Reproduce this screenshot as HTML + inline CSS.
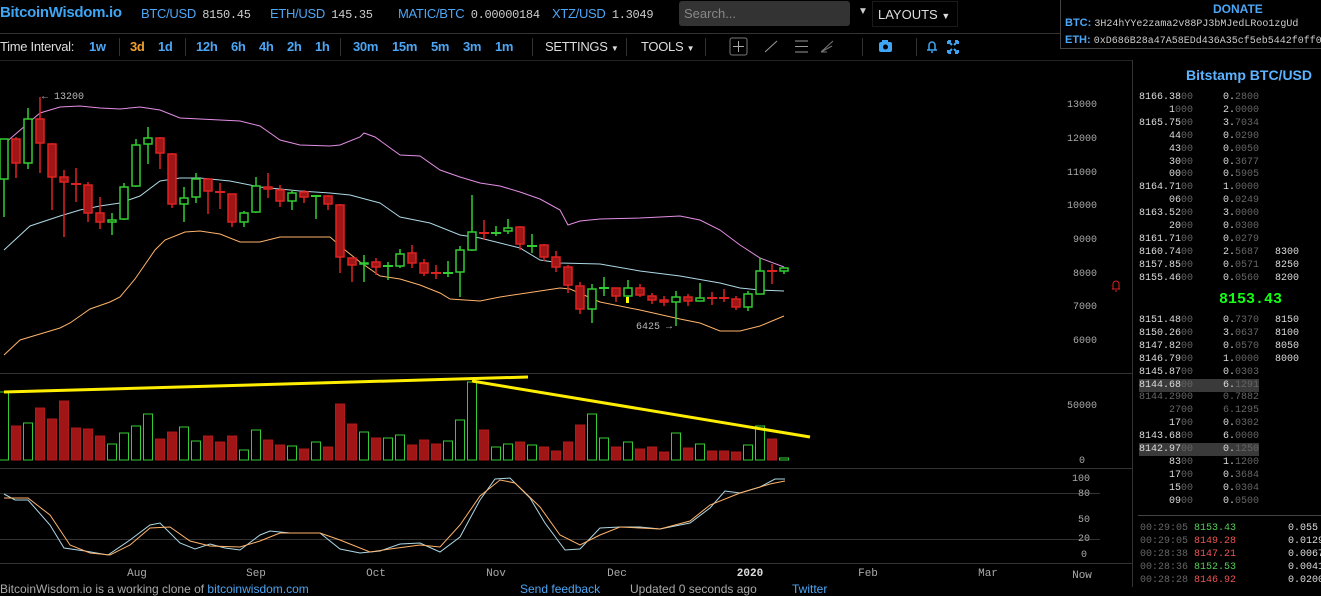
<!DOCTYPE html>
<html><head><meta charset="utf-8"><style>
*{margin:0;padding:0;box-sizing:border-box}
body{width:1321px;height:587px;background:#000;overflow:hidden;position:relative;font-family:"Liberation Sans Narrow","Liberation Sans",sans-serif;color:#ccc}
.a{position:absolute;white-space:nowrap}
.b{color:#4da6f5}
.m{font-family:"Liberation Mono",monospace}
.tb span{position:absolute;top:39px;font-size:13px;color:#4da6f5;font-weight:bold;letter-spacing:-0.3px}
.ob{position:absolute;left:1140px;width:170px;font-family:"Liberation Mono",monospace;font-size:10px;color:#ddd;height:13px;line-height:13px}
.ob i{font-style:normal;color:#666}
.ob .p{position:absolute;right:117px}
.ob .q{position:absolute;left:83px}
.ob .s{position:absolute;left:135px}
.dim{color:#666!important}
</style></head><body>
<div class="a b" style="left:0;top:4px;font-size:15px;font-weight:bold;font-family:'Liberation Sans',sans-serif;color:#3ea6f5;letter-spacing:-0.3px">BitcoinWisdom.io</div>
<div class="a" style="left:141px;top:6px;font-size:13px;letter-spacing:-0.3px"><span class="b">BTC/USD</span> <span class="m" style="font-size:12px;margin-left:3px">8150.45</span></div>
<div class="a" style="left:270px;top:6px;font-size:13px;letter-spacing:-0.3px"><span class="b">ETH/USD</span> <span class="m" style="font-size:12px;margin-left:3px">145.35</span></div>
<div class="a" style="left:398px;top:6px;font-size:13px;letter-spacing:-0.3px"><span class="b">MATIC/BTC</span> <span class="m" style="font-size:12px;margin-left:3px">0.00000184</span></div>
<div class="a" style="left:552px;top:6px;font-size:13px;letter-spacing:-0.3px"><span class="b">XTZ/USD</span> <span class="m" style="font-size:12px;margin-left:3px">1.3049</span></div>
<div class="a" style="left:679px;top:1px;width:171px;height:25px;background:#333;border-radius:3px;color:#888;font-size:13px;padding:5px 5px">Search...</div>
<div class="a" style="left:858px;top:6px;font-size:10px;color:#ccc">▼</div>
<div class="a" style="left:872px;top:1px;width:86px;height:26px;border:1px solid #1a1a1a;font-size:13px;padding:5px 5px;color:#ddd">LAYOUTS <span style="font-size:9px">▼</span></div>
<div class="a" style="left:1060px;top:-1px;width:270px;height:50px;border:1px solid #444;background:#000"></div>
<div class="a b" style="left:1213px;top:2px;font-size:12px;font-weight:bold">DONATE</div>
<div class="a" style="left:1065px;top:17px;font-size:11px"><b class="b">BTC:</b> <span class="m" style="font-size:10px">3H24hYYe2zama2v88PJ3bMJedLRoo1zgUd</span></div>
<div class="a" style="left:1065px;top:34px;font-size:11px"><b class="b">ETH:</b> <span class="m" style="font-size:10px">0xD686B28a47A58EDd436A35cf5eb5442f0ff0</span></div>
<div class="a" style="left:0;top:33px;width:1060px;height:1px;background:#333"></div>
<div class="tb">
<span style="left:0;color:#ddd;font-weight:normal">Time Interval:</span>
<span style="left:89px">1w</span><span style="left:130px;color:#f0a030">3d</span><span style="left:158px">1d</span>
<span style="left:196px">12h</span><span style="left:231px">6h</span><span style="left:259px">4h</span><span style="left:287px">2h</span><span style="left:315px">1h</span>
<span style="left:353px">30m</span><span style="left:392px">15m</span><span style="left:431px">5m</span><span style="left:463px">3m</span><span style="left:495px">1m</span>
<span style="left:545px;color:#ddd;font-weight:normal">SETTINGS <small style="font-size:8px">▼</small></span>
<span style="left:641px;color:#ddd;font-weight:normal">TOOLS <small style="font-size:8px">▼</small></span>
</div>
<div class="a" style="left:119px;top:38px;width:1px;height:18px;background:#333"></div>
<div class="a" style="left:185px;top:38px;width:1px;height:18px;background:#333"></div>
<div class="a" style="left:340px;top:38px;width:1px;height:18px;background:#333"></div>
<div class="a" style="left:532px;top:38px;width:1px;height:18px;background:#333"></div>
<div class="a" style="left:626px;top:38px;width:1px;height:18px;background:#333"></div>
<div class="a" style="left:705px;top:38px;width:1px;height:18px;background:#333"></div>
<div class="a" style="left:862px;top:38px;width:1px;height:18px;background:#333"></div>
<div class="a" style="left:916px;top:38px;width:1px;height:18px;background:#333"></div>
<svg class="a" style="left:720px;top:36px" width="250" height="22">
<rect x="10" y="2" width="17" height="17" fill="none" stroke="#777" rx="2"/><path d="M18.5 5v11M13 10.5h11" stroke="#aaa"/>
<path d="M45 16l12-11" stroke="#999"/>
<path d="M75 5h13M75 10.5h13M75 16h13" stroke="#999"/>
<path d="M101 16l12-11M101 16l11-6M101 16l6 0" stroke="#777"/>
<rect x="159" y="6" width="13" height="10" rx="2" fill="#3ea6f5"/><rect x="162" y="4" width="6" height="3" fill="#3ea6f5"/><circle cx="165.5" cy="11" r="2.5" fill="#000"/>
<path d="M207 14h10M209 14v-5a3 3 0 0 1 6 0v5M211 16h2" stroke="#3ea6f5" fill="none" stroke-width="1.5"/>
<path d="M228 5l4 4M238 5l-4 4M228 17l4-4M238 17l-4-4M228 5h3M228 5v3M238 5h-3M238 5v3M228 17h3M228 17v-3M238 17h-3M238 17v-3" stroke="#3ea6f5" stroke-width="2"/>
</svg>
<div class="a" style="left:0;top:60px;width:1132px;height:1px;background:#222"></div>
<svg class="a" style="left:0;top:0" width="1132" height="587">
<g stroke="#333" stroke-width="1"><line x1="0" y1="373.5" x2="1132" y2="373.5"/><line x1="0" y1="468.5" x2="1132" y2="468.5"/><line x1="0" y1="563.5" x2="1132" y2="563.5"/>
<line x1="0" y1="493.5" x2="1100" y2="493.5"/><line x1="0" y1="539.5" x2="1100" y2="539.5"/></g>
<polyline fill="none" stroke="#e58ee5" points="4,144 40,113 60,107 80,106 100,108 120,109 140,107 160,110 180,118 200,119 240,121 260,126 270,133 280,140 300,145 330,146 340,145 360,137 364,133 375,137 400,155 420,156 440,170 460,177 480,183 500,186 520,192 540,199 560,210 568,225 580,221 600,219 640,218 660,217 680,216 700,220 720,230 740,245 760,258 784,267"/>
<polyline fill="none" stroke="#add8e6" points="4,250 30,226 60,216 80,210 100,206 120,203 140,196 160,181 180,178 200,178 230,181 260,187 280,189 300,191 330,193 350,195 380,203 400,217 430,223 460,235 480,238 500,243 520,248 540,260 560,263 600,264 640,271 680,276 720,283 740,288 760,290 784,291"/>
<polyline fill="none" stroke="#ffb36b" points="4,355 20,340 40,334 60,328 70,323 80,316 90,309 110,302 120,297 135,279 155,250 165,240 185,232 200,231 220,234 240,242 260,242 280,237 320,237 330,237 345,250 360,262 380,276 400,279 420,285 440,293 450,299 480,301 500,297 520,294 540,291 560,288 570,289 600,302 640,310 680,319 700,323 720,331 740,331 760,326 784,316"/>
<g id="c" stroke-width="1.5"></g>
<g fill="#b8b8b8" font-family="Liberation Mono,monospace" font-size="10"><text x="42" y="99">← 13200</text><text x="636" y="329">6425 →</text></g>
<line x1="4" y1="392" x2="528" y2="377" stroke="#ffee00" stroke-width="3"/>
<line x1="472" y1="381" x2="810" y2="437" stroke="#ffee00" stroke-width="3"/>
<polyline fill="none" stroke="#add8e6" points="4,494 15,500 28,500 50,525 64,548 85,551 108,555 130,540 150,525 160,523 180,543 195,549 210,544 225,548 240,550 260,535 270,531 290,533 320,533 340,549 360,553 380,551 400,544 420,543 440,552 460,537 480,500 495,479 510,478 530,498 545,523 565,550 580,549 600,528 620,527 640,527 660,529 690,523 710,508 725,491 740,493 760,487 775,479 785,479"/>
<polyline fill="none" stroke="#ffb36b" points="4,498 28,498 50,515 70,545 90,553 110,555 130,545 150,528 170,527 190,541 210,546 240,547 260,541 280,533 320,533 340,540 370,552 390,549 420,545 440,547 460,525 480,496 500,480 515,483 540,507 560,535 580,545 600,535 620,527 660,529 690,521 710,505 740,493 770,484 785,481"/>
<g fill="#aaa" font-family="Liberation Mono,monospace" font-size="10" text-anchor="end">
<text x="1097" y="107">13000</text><text x="1097" y="141">12000</text><text x="1097" y="175">11000</text><text x="1097" y="208">10000</text><text x="1097" y="242">9000</text><text x="1097" y="276">8000</text><text x="1097" y="309">7000</text><text x="1097" y="343">6000</text>
<text x="1097" y="408">50000</text><text x="1085" y="463">0</text>
<text x="1090" y="481">100</text><text x="1090" y="496">80</text><text x="1090" y="522">50</text><text x="1090" y="541">20</text><text x="1087" y="557">0</text></g>
<g fill="#aaa" font-family="Liberation Mono,monospace" font-size="11" text-anchor="middle">
<text x="137" y="576">Aug</text><text x="256" y="576">Sep</text><text x="376" y="576">Oct</text><text x="496" y="576">Nov</text><text x="617" y="576">Dec</text><text x="750" y="576" fill="#ddd" font-weight="bold">2020</text><text x="868" y="576">Feb</text><text x="988" y="576">Mar</text><text x="1082" y="578">Now</text></g>
<path d="M1112 289h8M1113 289v-5a3 3 0 0 1 6 0v5M1115 291h2" stroke="#d22" fill="none"/>
</svg>
<div class="a" style="left:0;top:582px;font-size:12px;color:#aaa">BitcoinWisdom.io is a working clone of <span class="b">bitcoinwisdom.com</span></div>
<div class="a b" style="left:520px;top:582px;font-size:12px">Send feedback</div>
<div class="a" style="left:630px;top:582px;font-size:12px;color:#aaa">Updated 0 seconds ago</div>
<div class="a b" style="left:792px;top:582px;font-size:12px">Twitter</div>
<div class="a" style="left:1132px;top:60px;width:1px;height:527px;background:#333"></div>
<div class="a b" style="left:1186px;top:67px;font-size:14px;font-weight:bold;font-family:'Liberation Sans',sans-serif;color:#5cb3ff">Bitstamp BTC/USD</div>
<div id="ob"></div>
<div class="a" style="left:1219px;top:291px;font-family:'Liberation Mono',monospace;font-size:15px;font-weight:bold;color:#1f1">8153.43</div>
<div class="a" style="left:1138px;top:515px;width:183px;height:1px;background:#444"></div>
<script>
var C=[[4,139,179,139,217,1],[16,139,163,137,178,0],[28,119,163,108,169,1],[40,119,143,97,173,0],[52,144,177,143,210,0],[64,177,182,170,237,0],[76,184,184,168,202,0],[88,185,213,182,222,0],[100,213,222,197,229,0],[112,220,222,213,235,1],[124,187,219,183,220,1],[136,145,186,139,187,1],[148,138,144,127,164,1],[160,138,153,137,169,0],[172,154,204,153,208,0],[184,198,204,187,222,1],[196,179,197,173,203,1],[208,179,191,178,214,0],[220,192,192,183,209,0],[232,194,222,194,227,0],[244,213,222,211,227,1],[256,186,212,177,213,1],[268,187,189,173,198,0],[280,190,201,185,207,0],[292,193,201,190,210,1],[304,192,197,190,203,0],[316,196,196,196,219,1],[328,196,204,195,210,0],[340,205,257,204,273,0],[352,258,265,258,282,0],[364,263,264,255,282,1],[376,262,267,258,275,0],[388,266,266,262,280,1],[400,254,266,249,268,1],[412,253,263,245,268,0],[424,263,273,259,276,0],[436,273,273,265,279,0],[448,273,273,261,277,1],[460,250,272,246,297,1],[472,232,250,195,251,1],[484,233,233,220,240,0],[496,233,233,226,236,1],[508,228,231,219,234,1],[520,227,244,226,250,0],[532,246,246,234,253,1],[544,245,257,244,261,0],[556,257,267,251,272,0],[568,267,285,265,293,0],[580,286,309,282,314,0],[592,289,309,284,323,1],[604,288,288,277,296,1],[616,288,296,288,302,0],[628,288,296,280,302,1],[640,288,295,284,297,0],[652,296,300,293,304,0],[664,300,302,296,306,0],[676,297,302,291,326,1],[688,297,301,294,306,0],[700,298,301,283,301,1],[712,298,298,292,305,0],[724,298,298,289,302,0],[736,299,307,296,310,0],[748,294,307,291,311,1],[760,271,294,258,294,1],[772,271,271,264,284,0],[784,268,271,267,274,1]];
var V=[[392,1],[426,0],[423,1],[408,0],[419,0],[401,0],[428,0],[429,0],[436,0],[444,1],[433,1],[426,1],[414,1],[439,0],[432,0],[427,1],[441,1],[436,0],[442,0],[436,0],[450,1],[430,1],[440,0],[445,0],[446,1],[449,0],[442,1],[447,0],[404,0],[424,0],[432,1],[438,0],[438,1],[435,1],[445,0],[440,0],[444,0],[441,1],[420,1],[382,1],[430,0],[447,1],[444,1],[442,0],[445,1],[447,0],[451,0],[442,0],[425,0],[414,1],[438,1],[447,0],[442,1],[449,0],[447,0],[452,0],[433,1],[448,0],[444,1],[451,0],[451,0],[452,0],[445,1],[426,1],[439,0],[458,1]];
var s='';
C.forEach(function(c){var col=c[5]?'#3c3':'#d22';
s+='<line x1="'+c[0]+'" y1="'+c[3]+'" x2="'+c[0]+'" y2="'+c[4]+'" stroke="'+col+'"/>';
if(c[2]-c[1]<1)s+='<line x1="'+(c[0]-5)+'" y1="'+c[1]+'" x2="'+(c[0]+5)+'" y2="'+c[1]+'" stroke="'+col+'" stroke-width="2"/>';
else s+='<rect x="'+(c[0]-4)+'" y="'+c[1]+'" width="8" height="'+(c[2]-c[1])+'" fill="'+(c[5]?'#000':'#a01515')+'" stroke="'+col+'"/>';});
s+='<rect x="626" y="297" width="3" height="6" fill="#ff0"/>';
V.forEach(function(v,i){var x=4+i*12;s+='<rect x="'+(x-4.5)+'" y="'+v[0]+'" width="9" height="'+(460-v[0])+'" fill="'+(v[1]?'#000':'#a01515')+'" stroke="'+(v[1]?'#3c3':'#b01a1a')+'" stroke-width="1"/>';});
document.getElementById('c').innerHTML=s;
var R=[['8166.38','00','0.','2800',''],['1','000','2.','0000',''],['8165.75','00','3.','7034',''],['44','00','0.','0290',''],['43','00','0.','0050',''],['30','00','0.','3677',''],['00','00','0.','5905',''],['8164.71','00','1.','0000',''],['06','00','0.','0249',''],['8163.52','00','3.','0000',''],['20','00','0.','0300',''],['8161.71','00','0.','0279',''],['8160.74','00','2.','5687','8300'],['8157.85','00','0.','0571','8250'],['8155.46','00','0.','0560','8200']];
var R2=[['8151.48','00','0.','7370','8150'],['8150.26','00','3.','0637','8100'],['8147.82','00','0.','0570','8050'],['8146.79','00','1.','0000','8000'],['8145.87','00','0.','0303',''],['8144.68','00','6.','1291','',1],['8144.29','00','0.','7882','',2],['27','00','6.','1295','',2],['17','00','0.','0302',''],['8143.68','00','6.','0000',''],['8142.97','00','0.','1250','',1],['83','00','1.','1200',''],['17','00','0.','3684',''],['15','00','0.','0304',''],['09','00','0.','0500','']];
function row(r,y){var st=r[5]==2?' dim':'';var bg=r[5]==1?'<div style="position:absolute;left:-1px;top:0;width:120px;height:13px;background:#3a3a3a"></div>':'';
return '<div class="ob'+st+'" style="top:'+y+'px">'+bg+'<span class="p'+st+'">'+r[0]+'<i>'+r[1]+'</i></span><span class="q'+st+'">'+r[2]+'<i>'+r[3]+'</i></span><span class="s">'+r[4]+'</span></div>';}
var h='';R.forEach(function(r,i){h+=row(r,91+i*12.9);});R2.forEach(function(r,i){h+=row(r,314+i*12.9);});
var T=[['00:29:05','8153.43','#5c5','0.055'],['00:29:05','8149.28','#e55','0.0129'],['00:28:38','8147.21','#e55','0.0067'],['00:28:36','8152.53','#5c5','0.0041'],['00:28:28','8146.92','#e55','0.0200']];
T.forEach(function(t,i){h+='<div class="ob" style="top:'+(522+i*13)+'px;width:190px"><i>'+t[0]+'</i> <span style="color:'+t[2]+'">'+t[1]+'</span><span style="position:absolute;left:148px">'+t[3]+'</span></div>';});
document.getElementById('ob').innerHTML=h;
</script>
</body></html>
